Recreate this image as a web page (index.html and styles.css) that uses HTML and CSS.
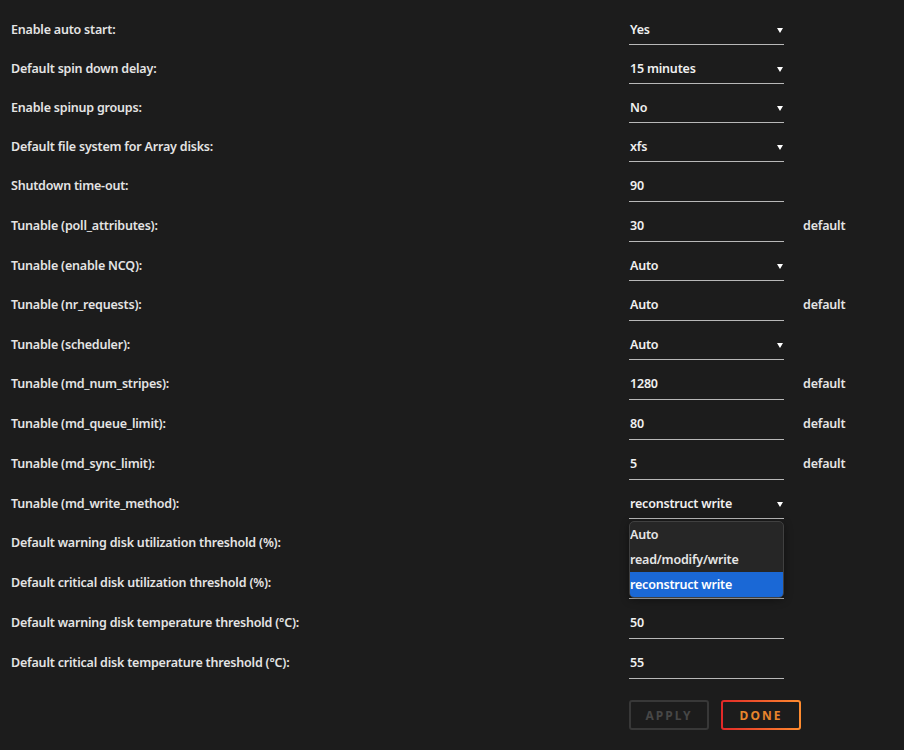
FILE: index.html
```html
<!DOCTYPE html>
<html lang="en">
<head>
  <meta charset="UTF-8" />
  <meta name="viewport" content="width=device-width, initial-scale=1.0" />
  <title>Disk Settings</title>
  <link rel="stylesheet" href="styles.css">
</head>
<body>
  <form class="settings">
    <div class="row sel">
      <span class="label">Enable auto start:</span>
      <div class="field">Yes<svg class="arrow" width="6" height="6" viewBox="0 0 6 6"><polygon points="0,1 6,1 3,6" /></svg></div>
    </div>
    <div class="row sel">
      <span class="label">Default spin down delay:</span>
      <div class="field">15 minutes<svg class="arrow" width="6" height="6" viewBox="0 0 6 6"><polygon points="0,1 6,1 3,6" /></svg></div>
    </div>
    <div class="row sel">
      <span class="label">Enable spinup groups:</span>
      <div class="field">No<svg class="arrow" width="6" height="6" viewBox="0 0 6 6"><polygon points="0,1 6,1 3,6" /></svg></div>
    </div>
    <div class="row sel">
      <span class="label">Default file system for Array disks:</span>
      <div class="field">xfs<svg class="arrow" width="6" height="6" viewBox="0 0 6 6"><polygon points="0,1 6,1 3,6" /></svg></div>
    </div>
    <div class="row inp">
      <span class="label">Shutdown time-out:</span>
      <div class="field">90</div>
    </div>
    <div class="row inp">
      <span class="label">Tunable (poll_attributes):</span>
      <div class="field">30</div>
      <span class="hint">default</span>
    </div>
    <div class="row sel">
      <span class="label">Tunable (enable NCQ):</span>
      <div class="field">Auto<svg class="arrow" width="6" height="6" viewBox="0 0 6 6"><polygon points="0,1 6,1 3,6" /></svg></div>
    </div>
    <div class="row inp">
      <span class="label">Tunable (nr_requests):</span>
      <div class="field">Auto</div>
      <span class="hint">default</span>
    </div>
    <div class="row sel">
      <span class="label">Tunable (scheduler):</span>
      <div class="field">Auto<svg class="arrow" width="6" height="6" viewBox="0 0 6 6"><polygon points="0,1 6,1 3,6" /></svg></div>
    </div>
    <div class="row inp">
      <span class="label">Tunable (md_num_stripes):</span>
      <div class="field">1280</div>
      <span class="hint">default</span>
    </div>
    <div class="row inp">
      <span class="label">Tunable (md_queue_limit):</span>
      <div class="field">80</div>
      <span class="hint">default</span>
    </div>
    <div class="row inp">
      <span class="label">Tunable (md_sync_limit):</span>
      <div class="field">5</div>
      <span class="hint">default</span>
    </div>
    <div class="row sel">
      <span class="label">Tunable (md_write_method):</span>
      <div class="field open">reconstruct write<svg class="arrow" width="6" height="6" viewBox="0 0 6 6"><polygon points="0,1 6,1 3,6" /></svg>
        <ul class="menu">
          <li>Auto</li>
          <li>read/modify/write</li>
          <li class="active">reconstruct write</li>
        </ul>
      </div>
    </div>
    <!-- these two values sit under the open menu -->
    <div class="row inp">
      <span class="label">Default warning disk utilization threshold (%):</span>
      <div class="field"></div>
    </div>
    <div class="row inp">
      <span class="label">Default critical disk utilization threshold (%):</span>
      <div class="field"></div>
    </div>
    <div class="row inp">
      <span class="label">Default warning disk temperature threshold (°C):</span>
      <div class="field">50</div>
    </div>
    <div class="row inp">
      <span class="label">Default critical disk temperature threshold (°C):</span>
      <div class="field">55</div>
    </div>
    <div class="actions">
      <button type="button" class="btn apply" disabled>Apply</button>
      <button type="button" class="btn done">Done</button>
    </div>
  </form>
</body>
</html>
```

FILE: styles.css
```css
* { margin: 0; padding: 0; box-sizing: border-box; }
body {
  font-family: "Noto Sans", "Open Sans", sans-serif;
  font-size: 12.5px;
  font-weight: 600;
  letter-spacing: -0.2px;
  background-color: #1c1c1c;
  color: #e4e4e4;
}
.settings {
  padding: 11px 0 0 11px;
}
.row {
  display: flex;
  align-items: flex-start;
  margin-bottom: 5px;
}
.label {
  width: 618px;
  padding-top: 6px;
  line-height: 26px;
}
.field {
  position: relative;
  width: 155px;
  height: 34px;
  padding: 6px 0 0 1px;
  line-height: 26px;
  border-bottom: 1px solid #b8b8b8;
  color: #f0f0f0;
}
.inp .field { height: 35px; }
.arrow {
  position: absolute;
  right: 1px;
  top: 16px;
  fill: #fff;
}
.hint {
  margin-left: 19px;
  padding-top: 6px;
  line-height: 26px;
}
.menu {
  position: absolute;
  top: 36px;
  left: 0;
  width: 155px;
  list-style: none;
  background: #262626;
  border: 1px solid #404040;
  border-radius: 5px;
  overflow: hidden;
  box-shadow: 0 2px 8px rgba(0,0,0,0.4);
  z-index: 2;
}
.menu li {
  height: 25px;
  line-height: 25px;
  color: #e6e6e6;
}
.menu li.active {
  background-color: #1a68d6;
  color: #fff;
}
.actions {
  display: flex;
  gap: 12px;
  margin: 21px 0 0 618px;
}
.btn {
  width: 80px;
  height: 30px;
  font-family: inherit;
  font-size: 12px;
  font-weight: 700;
  letter-spacing: 2px;
  text-transform: uppercase;
  border-radius: 3px;
  background: transparent;
  cursor: pointer;
}
.apply {
  border: 2px solid #383838;
  color: #474747;
}
.done {
  border: 2px solid transparent;
  background: linear-gradient(#1c1c1c, #1c1c1c) padding-box,
              linear-gradient(90deg, #e22828, #ff8c2f) border-box;
  color: #e8852c;
}
```
